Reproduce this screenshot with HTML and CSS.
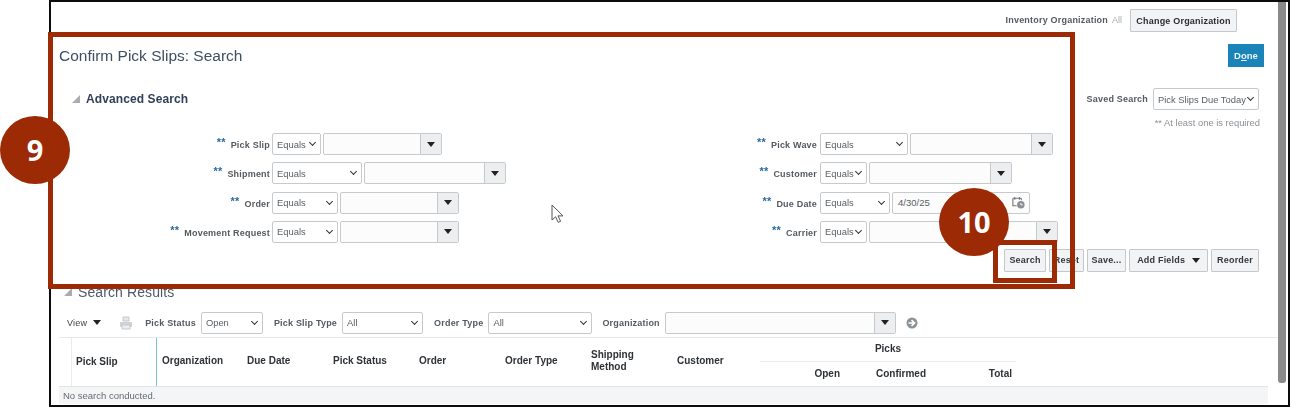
FILE: index.html
```html
<!DOCTYPE html>
<html lang="en">
<head>
<meta charset="utf-8">
<title>Confirm Pick Slips: Search</title>
<link rel="stylesheet" href="styles.css">
</head>
<body>
<div class="stage">
  <div class="frame">
    <main class="page">
      <div class="orgbar">
        <span class="lbl">Inventory Organization</span><span class="allval">All</span>
        <button class="btn org">Change Organization</button>
      </div>
      <div class="titlebar">
        <h1>Confirm Pick Slips: Search</h1>
        <button class="done">D<u>o</u>ne</button>
      </div>
      <div class="advbar">
        <h2><i class="tri"></i>Advanced Search</h2>
        <div class="saved">
          <span class="lbl">Saved Search</span>
          <div class="sel w106"><span>Pick Slips Due Today</span><i class="chev"></i></div>
        </div>
      </div>
      <div class="note">** At least one is required</div>
      <div class="form">
        <div class="col left">
          <div class="row"><label><b>**</b>Pick Slip</label><div class="sel w49"><span>Equals</span><i class="chev"></i></div><div class="combo w119"><i class="drop"><i class="arrow"></i></i></div></div>
          <div class="row"><label><b>**</b>Shipment</label><div class="sel w90"><span>Equals</span><i class="chev"></i></div><div class="combo w142"><i class="drop"><i class="arrow"></i></i></div></div>
          <div class="row"><label><b>**</b>Order</label><div class="sel w66"><span>Equals</span><i class="chev"></i></div><div class="combo w119"><i class="drop"><i class="arrow"></i></i></div></div>
          <div class="row"><label><b>**</b>Movement Request</label><div class="sel w66"><span>Equals</span><i class="chev"></i></div><div class="combo w119"><i class="drop"><i class="arrow"></i></i></div></div>
        </div>
        <div class="col right">
          <div class="row"><label><b>**</b>Pick Wave</label><div class="sel w88"><span>Equals</span><i class="chev"></i></div><div class="combo w143"><i class="drop"><i class="arrow"></i></i></div></div>
          <div class="row"><label><b>**</b>Customer</label><div class="sel w47"><span>Equals</span><i class="chev"></i></div><div class="combo w143"><i class="drop"><i class="arrow"></i></i></div></div>
          <div class="row"><label><b>**</b>Due Date</label><div class="sel w70"><span>Equals</span><i class="chev"></i></div><div class="combo w138"><span class="val">4/30/25</span>
            <svg class="cal" viewBox="0 0 16 16" width="15" height="15"><path d="M2 3.5h9M2 3.5v8h4M11 3.5v2M4 2v3M9 2v3" fill="none" stroke="#777" stroke-width="1.2"/><circle cx="10.5" cy="10.5" r="4" fill="#8a8f94"/><path d="M10.5 8.5v2h2" fill="none" stroke="#fff"/></svg></div></div>
          <div class="row"><label><b>**</b>Carrier</label><div class="sel w47"><span>Equals</span><i class="chev"></i></div><div class="combo w189"><i class="drop"><i class="arrow"></i></i></div></div>
        </div>
      </div>
      <div class="actions">
        <button class="btn b42">Search</button>
        <button class="btn b35">Reset</button>
        <button class="btn b39">Save...</button>
        <button class="btn b79">Add Fields <i class="arrow"></i></button>
        <button class="btn b48">Reorder</button>
      </div>
      <h2 class="results"><i class="tri"></i>Search Results</h2>
      <div class="toolbar">
        <span class="lbl view">View <i class="arrow"></i></span>
        <svg class="print" viewBox="0 0 14 14" width="14" height="14"><path d="M4 1h6v4H4z" fill="#e4e6e8" stroke="#c6c9cc"/><path d="M1 6h12v5H1z" fill="#d0d3d6"/><path d="M3 9h8v4H3z" fill="#eceef0" stroke="#c6c9cc"/></svg>
        <span class="lbl t1">Pick Status</span><div class="sel w62"><span>Open</span><i class="chev"></i></div>
        <span class="lbl t2">Pick Slip Type</span><div class="sel w81"><span>All</span><i class="chev"></i></div>
        <span class="lbl t3">Order Type</span><div class="sel w104"><span>All</span><i class="chev"></i></div>
        <span class="lbl t4">Organization</span><div class="combo w231"><i class="drop"><i class="arrow"></i></i></div>
        <svg class="go" viewBox="0 0 12 12" width="12" height="12"><circle cx="6" cy="6" r="5.5" fill="#8d9296"/><path d="M2.5 6h5M5.5 3.2 8.6 6 5.5 8.8" fill="none" stroke="#fff" stroke-width="1.6"/></svg>
      </div>
      <div class="table">
        <div class="th c-slip">Pick Slip</div>
        <div class="th c-org">Organization</div>
        <div class="th">Due Date</div>
        <div class="th">Pick Status</div>
        <div class="th">Order</div>
        <div class="th">Order Type</div>
        <div class="th">Shipping<br>Method</div>
        <div class="th c-cust">Customer</div>
        <div class="picks">
          <div class="picks-top">Picks</div>
          <div class="picks-sub"><span class="p-open">Open</span><span class="p-conf">Confirmed</span><span class="p-total">Total</span></div>
        </div>
      </div>
      <div class="empty">No search conducted.</div>
    </main>
    <div class="scrollbar"></div>
  </div>

  <div class="callout-box big"></div>
  <div class="callout-box small"></div>
  <div class="badge nine">9</div>
  <div class="badge ten">10</div>
  <svg class="cursor" viewBox="0 0 14 20" width="14" height="20"><path d="M1 1v15l3.6-3.2 2.6 5.6 2.4-1.1-2.6-5.4H12z" fill="#fff" stroke="#555" stroke-width="1"/></svg>
</div>
</body>
</html>
```
FILE: styles.css
```css
* { box-sizing: border-box; }
html, body { margin: 0; padding: 0; background: #fff; }
body { font-family: "Liberation Sans", Arial, sans-serif; overflow: hidden; }
.stage { position: relative; width: 1291px; height: 407px; overflow: hidden; }
.frame { margin-left: 49px; width: 1241px; height: 407px; border: 2px solid #0c0c0c; display: flex; filter: blur(0.35px); }
.page { width: 1227px; height: 403px; overflow: hidden; display: flex; flex-direction: column; }
.scrollbar { width: 8px; height: 381px; background: #8a8a8a; border-radius: 0 0 3px 3px; }

.lbl { font-size: 9px; font-weight: 700; color: #555a5f; letter-spacing: .2px; white-space: nowrap; }
.orgbar { height: 30px; padding: 7px 41px 0 0; display: flex; justify-content: flex-end; align-items: flex-start; }
.orgbar .lbl { line-height: 23px; }
.allval { font-size: 9px; line-height: 23px; color: #a8adb1; margin: 0 8px 0 4px; }
.btn { height: 23px; padding: 0; border: 1px solid #c4c8cb; background: #f1f3f4; font: 700 9px "Liberation Sans", Arial, sans-serif; color: #33383d; letter-spacing: .2px; white-space: nowrap; border-radius: 1px; }
.org { width: 107px; color: #2a2e32; }
.titlebar { height: 35px; padding: 12px 14px 0 8px; display: flex; justify-content: space-between; align-items: flex-start; }
h1 { margin: 0; font-size: 15.5px; font-weight: 400; line-height: 23px; color: #3d4f63; }
.done { width: 36px; height: 23px; padding: 0; border: 0; background: #1a84b8; color: #e8f4fa; font: 700 9.5px "Liberation Sans", Arial, sans-serif; }
.advbar { margin-top: 21px; height: 22px; padding: 0 19px 0 21px; display: flex; justify-content: space-between; align-items: center; }
h2 { margin: 0; font-size: 12px; font-weight: 700; color: #33405a; display: flex; align-items: center; letter-spacing: .1px; }
.tri { width: 0; height: 0; border-left: 8px solid transparent; border-bottom: 8px solid #a9adb1; margin-right: 6px; }
.saved { display: flex; align-items: center; gap: 5px; }
.note { margin-top: 6px; height: 14px; padding-right: 18px; text-align: right; font-size: 9.4px; line-height: 14px; color: #8b9095; }

.form { margin-top: 3px; display: flex; }
.col { display: flex; flex-direction: column; gap: 7.33px; }
.left { width: 600px; }
.left label { width: 219px; }
.right label { width: 166px; }
.row { height: 22px; display: flex; align-items: center; gap: 2px; }
.row label { font-size: 9px; font-weight: 700; color: #555a5f; letter-spacing: .2px; text-align: right; white-space: nowrap; }
.row label b { color: #2a6a9e; font-size: 11px; margin-right: 5px; position: relative; top: -2px; }
.right label { margin-right: 1px; }

.sel { height: 22px; border: 1px solid #c6cacd; border-radius: 2px; background: #fff; display: flex; align-items: center; justify-content: space-between; padding: 0 4px; font-size: 9.4px; color: #5a5f64; white-space: nowrap; overflow: hidden; flex: none; }
.chev { flex: none; width: 5px; height: 5px; border-right: 1.4px solid #333; border-bottom: 1.4px solid #333; transform: rotate(45deg); margin: -3px 1px 0 2px; }
.combo { height: 22px; border: 1px solid #c6cacd; border-radius: 2px; background: #fcfcfd; display: flex; justify-content: space-between; align-items: center; flex: none; }
.drop { width: 21px; height: 20px; background: #eceef0; border-left: 1px solid #c6cacd; display: flex; align-items: center; justify-content: center; margin-left: auto; }
.arrow { display: inline-block; width: 0; height: 0; border-left: 4px solid transparent; border-right: 4px solid transparent; border-top: 5px solid #222; }
.val { font-size: 9.5px; color: #5a5f64; padding-left: 5px; }
.cal { margin-right: 3px; }

.w47 { width: 47px; } .w49 { width: 49px; } .w62 { width: 62px; } .w66 { width: 66px; } .w70 { width: 70px; }
.w81 { width: 81px; } .w88 { width: 88px; } .w90 { width: 90px; } .w104 { width: 104px; } .w106 { width: 106px; }
.w119 { width: 119px; } .w138 { width: 138px; } .w142 { width: 142px; } .w143 { width: 143px; } .w189 { width: 189px; } .w231 { width: 231px; }

.actions { margin-top: 6px; height: 23px; padding-right: 19px; display: flex; justify-content: flex-end; gap: 3px; }
.b42 { width: 42px; } .b35 { width: 35px; } .b39 { width: 39px; } .b79 { width: 79px; } .b48 { width: 48px; }
.b79 .arrow { margin-left: 4px; }

.results { margin-top: 11px; height: 18px; padding-left: 13px; font-size: 14px; font-weight: 400; color: #4b5a6c; }
.toolbar { margin-top: 11px; height: 22px; padding-left: 16px; display: flex; align-items: center; }
.toolbar .sel, .toolbar .combo { margin-left: 5px; }
.view { display: inline-flex; align-items: center; gap: 6px; font-weight: 400; color: #444; }
.print { margin-left: 18px; }
.t1 { margin-left: 12px; } .t2, .t3 { margin-left: 11px; } .t4 { margin-left: 10px; }
.go { margin-left: 10px; }

.table { margin: 3px 0 0 8px; height: 49px; border-top: 1px solid #e6e8ea; display: flex; align-items: center; }
.th { width: 86px; flex: none; margin-top: -1px; padding-left: 5px; font-size: 10px; line-height: 12px; font-weight: 700; color: #2e3236; }
.c-slip { width: 86px; margin: 0 0 0 12px; height: 48px; line-height: 47px; padding-left: 4px; border-left: 1px solid #e8eaec; border-right: 1px solid #7fc0cc; }
.c-org { width: 85px; }
.c-cust { width: 88px; }
.picks { width: 256px; height: 48px; flex: none; display: flex; flex-direction: column; font-size: 10px; font-weight: 700; color: #2e3236; }
.picks-top { height: 24px; line-height: 21px; border-bottom: 1px solid #e9ebed; text-align: center; }
.picks-sub { flex: 1; line-height: 23px; display: flex; }
.p-open { width: 80px; text-align: right; }
.p-conf { margin-left: 36px; }
.p-total { margin-left: auto; padding-right: 4px; }
.empty { margin: 0 10px 0 8px; height: 18px; background: #f4f5f6; border-top: 1px solid #e2e4e6; font-size: 9.5px; line-height: 17px; color: #666b70; padding-left: 4px; }

.callout-box { position: absolute; border: 5px solid #9b2a05; }
.big { left: 48px; top: 32px; width: 1027px; height: 257px; }
.small { left: 993px; top: 240px; width: 64px; height: 43px; }
.badge { position: absolute; width: 70px; height: 68px; border-radius: 50%; background: #9b2a05; color: #fff; font: 700 29px/68px "Open Sans", "Liberation Sans", sans-serif; text-align: center; }
.nine { left: 0; top: 116px; }
.ten { left: 939px; top: 188px; }
.cursor { position: absolute; left: 551px; top: 204px; }
```
